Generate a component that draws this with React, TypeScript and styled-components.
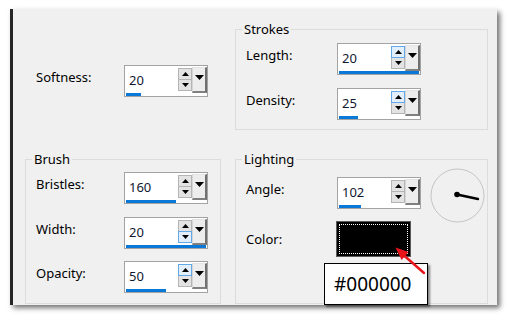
import React from 'react';
import styled, { createGlobalStyle } from 'styled-components';

const Global = createGlobalStyle`
  html, body { margin: 0; padding: 0; background: #ffffff; }
  body { font-family: "Noto Sans", "Segoe UI", sans-serif; color: #000; }
`;

const Page = styled.div`
  width: 507px;
  height: 317px;
  box-sizing: border-box;
  padding: 9px 0 0 10px;
  background: #ffffff;
  overflow: hidden;
`;

const Dialog = styled.div`
  position: relative;
  width: 487px;
  height: 296px;
  box-sizing: border-box;
  background: #f0f0f0;
  border-left: 3px solid #262626;
  box-shadow: 3px 3px 5px rgba(0, 0, 0, 0.55);
  padding: 20px 9px 0 12px;
  display: grid;
  grid-template-columns: 196px 253px;
  grid-template-rows: 101px 145px;
  column-gap: 14px;
  row-gap: 29px;
`;

const Plain = styled.div`
  padding: 36px 0 0 11px;
`;

const Group = styled.div`
  border: 1px solid #dcdcdc;
  padding: 0 10px;
  display: flex;
  flex-direction: column;
`;

const Legend = styled.div`
  align-self: flex-start;
  margin: -9px 0 0 -4px;
  padding: 0 2px;
  font-size: 13px;
  line-height: 16px;
  background: #f0f0f0;
`;

const Rows = styled.div<{ $top: number; $gap: number }>`
  display: flex;
  flex-direction: column;
  margin-top: ${p => p.$top}px;
  gap: ${p => p.$gap}px;
`;

const Row = styled.div<{ $center?: boolean }>`
  display: flex;
  align-items: ${p => (p.$center ? 'center' : 'flex-start')};
  height: ${p => (p.$center ? 'auto' : '32px')};
`;

const Label = styled.div<{ $w: number; $center?: boolean }>`
  width: ${p => p.$w}px;
  flex: none;
  padding-top: ${p => (p.$center ? 0 : 4)}px;
  font-size: 13px;
  line-height: 16px;
`;

const SpinBox = styled.div`
  width: 84px;
  height: 32px;
  flex: none;
  box-sizing: border-box;
  border: 1px solid #a3a3a3;
  background: #ffffff;
  display: flex;
  flex-direction: column;
`;

const SpinTop = styled.div`
  display: flex;
  height: 27px;
`;

const Field = styled.div`
  flex: 1;
  padding: 6px 0 0 4px;
  font-size: 13px;
  line-height: 16px;
  color: #101830;
`;

const SpinCol = styled.div`
  width: 14px;
  margin-top: 2px;
  display: flex;
  flex-direction: column;
`;

const SpinButton = styled.div<{ $hot?: boolean }>`
  position: relative;
  z-index: ${p => (p.$hot ? 1 : 0)};
  width: 14px;
  height: 12px;
  box-sizing: border-box;
  border: 1px solid ${p => (p.$hot ? '#62a8e8' : '#b4b4b4')};
  background: ${p => (p.$hot ? '#e2effb' : '#e3e3e3')};
  display: flex;
  align-items: center;
  justify-content: center;
  & + & {
    margin-top: -1px;
  }
`;

const DropButton = styled.div`
  width: 15px;
  height: 26px;
  margin-top: 1px;
  box-sizing: border-box;
  background: #ededed;
  border-left: 1px solid #d6d6d6;
  border-top: 1px solid #e4e4e4;
  border-right: 2px solid #707070;
  border-bottom: 2px solid #808080;
  display: flex;
  justify-content: center;
  padding-top: 7px;
`;

const BarTrack = styled.div`
  height: 3px;
  padding: 0 1px;
`;

const BarFill = styled.div`
  height: 3px;
  background: #0a78d7;
`;

const Dial = styled.svg`
  flex: none;
  margin: -9px 0 0 9px;
`;

const Swatch = styled.div`
  width: 75px;
  height: 36px;
  box-sizing: border-box;
  border: 1px solid #5a5a5a;
  background: #000;
  padding: 2px;
`;

const SwatchInner = styled.div`
  height: 100%;
  box-sizing: border-box;
  border: 1px dotted #ffffff;
`;

const Tooltip = styled.div`
  position: absolute;
  left: 311px;
  top: 254px;
  width: 104px;
  height: 42px;
  box-sizing: border-box;
  background: #ffffff;
  border: 1px solid #000;
  box-shadow: 2px 2px 2px rgba(0, 0, 0, 0.45);
  padding: 0 0 0 9px;
  font-family: "Noto Sans", sans-serif;
  font-size: 19px;
  line-height: 40px;
  color: #000;
`;

const Arrow = styled.svg`
  position: absolute;
  left: 377px;
  top: 231px;
`;

const Up = () => (
  <svg width="7" height="4" viewBox="0 0 7 4"><path d="M0 4 L3.5 0 L7 4 Z" fill="#000" /></svg>
);
const Down = () => (
  <svg width="7" height="4" viewBox="0 0 7 4"><path d="M0 0 L7 0 L3.5 4 Z" fill="#000" /></svg>
);
const DropTri = () => (
  <svg width="9" height="5" viewBox="0 0 9 5"><path d="M0 0 L9 0 L4.5 5 Z" fill="#000" /></svg>
);

type SpinProps = { value: string; bar: number; hot?: 'up' | 'down' };

const Spinner = ({ value, bar, hot }: SpinProps) => (
  <SpinBox>
    <SpinTop>
      <Field>{value}</Field>
      <SpinCol>
        <SpinButton $hot={hot === 'up'}><Up /></SpinButton>
        <SpinButton $hot={hot === 'down'}><Down /></SpinButton>
      </SpinCol>
      <DropButton><DropTri /></DropButton>
    </SpinTop>
    <BarTrack>
      <BarFill style={{ width: bar }} />
    </BarTrack>
  </SpinBox>
);

export default function App() {
  return (
    <Page>
      <Global />
      <Dialog>
        <Plain>
          <Row>
            <Label $w={88}>Softness:</Label>
            <Spinner value="20" bar={15} />
          </Row>
        </Plain>

        <Group>
          <Legend>Strokes</Legend>
          <Rows $top={6} $gap={13}>
            <Row>
              <Label $w={91}>Length:</Label>
              <Spinner value="20" bar={80} hot="up" />
            </Row>
            <Row>
              <Label $w={91}>Density:</Label>
              <Spinner value="25" bar={19} hot="up" />
            </Row>
          </Rows>
        </Group>

        <Group>
          <Legend>Brush</Legend>
          <Rows $top={5} $gap={12.5}>
            <Row>
              <Label $w={88}>Bristles:</Label>
              <Spinner value="160" bar={50} />
            </Row>
            <Row>
              <Label $w={88}>Width:</Label>
              <Spinner value="20" bar={80} hot="down" />
            </Row>
            <Row>
              <Label $w={88}>Opacity:</Label>
              <Spinner value="50" bar={40} hot="up" />
            </Row>
          </Rows>
        </Group>

        <Group>
          <Legend>Lighting</Legend>
          <Rows $top={10} $gap={12}>
            <Row>
              <Label $w={91}>Angle:</Label>
              <Spinner value="102" bar={22} />
              <Dial width="55" height="55" viewBox="0 0 55 55">
                <circle cx="27.5" cy="27.5" r="26.5" fill="none" stroke="#c4c4c4" strokeWidth="1" />
                <line x1="27" y1="26.5" x2="48" y2="31" stroke="#000" strokeWidth="2.4" strokeLinecap="round" />
                <circle cx="27" cy="26.5" r="2.8" fill="#000" />
              </Dial>
            </Row>
            <Row $center>
              <Label $w={90} $center>Color:</Label>
              <Swatch><SwatchInner /></Swatch>
            </Row>
          </Rows>
        </Group>

        <Tooltip>#000000</Tooltip>
        <Arrow width="40" height="40" viewBox="0 0 40 40">
          <line x1="34" y1="33" x2="14" y2="15.5" stroke="#e8141a" strokeWidth="2.4" strokeLinecap="round" />
          <path d="M5.5 7.5 L18.6 12 L11.6 19.9 Z" fill="#e8141a" />
        </Arrow>
      </Dialog>
    </Page>
  );
}
